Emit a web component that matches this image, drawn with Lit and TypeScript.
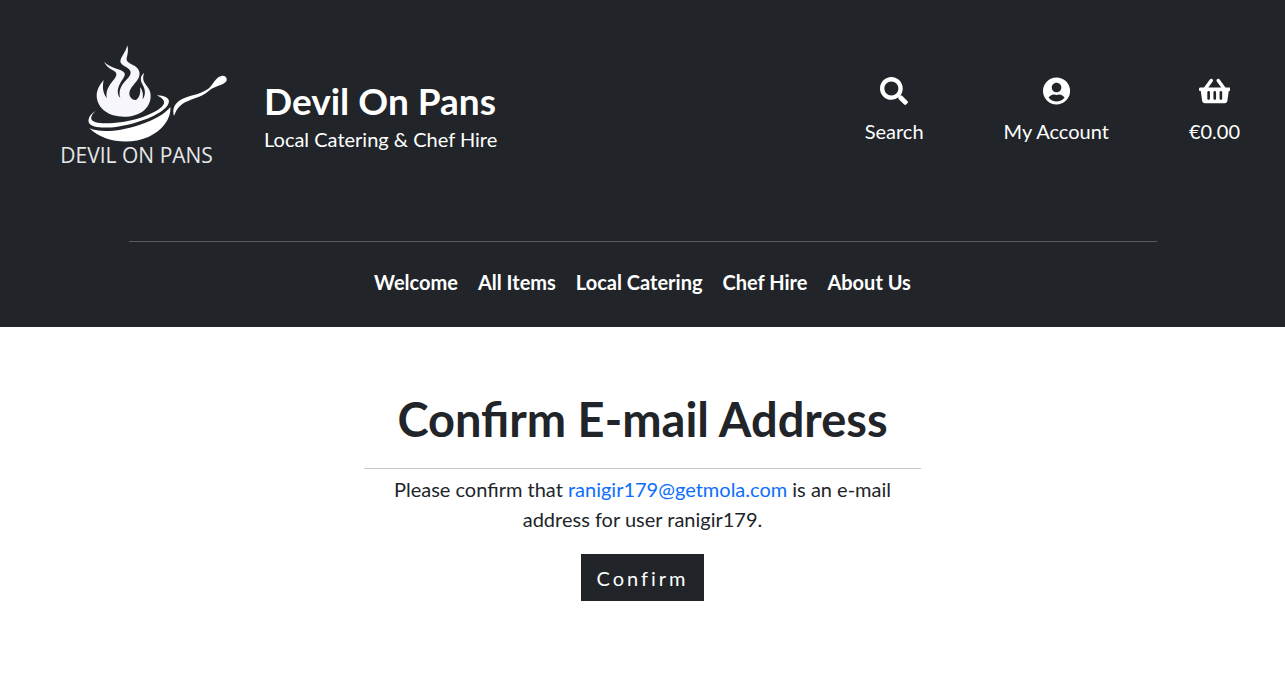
import { LitElement, html, css } from "lit";
import { customElement } from "lit/decorators.js";

@customElement("brand-logo")
class BrandLogo extends LitElement {
  static styles = css`
    :host { display: block; flex: none; }
    svg { display: block; width: 200px; height: 200px; }
    .wordmark { font: 400 63px "Open Sans", sans-serif; fill: #e6e6e8; }
  `;

  render() {
    return html`
      <svg viewBox="0 0 600 600" fill="#fff" role="img" aria-label="Devil On Pans logo">
        <g transform="translate(0 57)">
          <path transform="translate(120 15)" fill="#f8f6fd" d="M112 16 C106 40 92 50 91 65 C95 78 115 80 121 93 C126 108 108 118 97 134 C88 148 87 160 91 174 C80 162 82 145 90 131 C97 118 106 110 104 100 C98 86 60 86 42 65 C52 86 70 88 78 98 C84 110 66 122 58 137 C50 150 48 160 50 174 C40 160 36 145 41 120 C26 138 20 152 20 168 C22 206 56 230 102 230 C148 230 182 206 182 167 C182 142 163 135 160 119 C159 110 160 104 163 98 C150 108 150 120 158 134 C168 152 166 166 158 178 C160 164 158 150 150 142 C153 160 148 174 138 180 C127 181 118 172 118 160 C119 142 138 130 146 113 C153 98 146 84 133 77 C118 69 108 66 110 54 C113 42 116 30 112 16 Z"/>
          <path d="M137 228 C121 236 112 253 117 264 C124 277 158 281 202 275 C263 267 334 239 353 211 C365 192 349 182 320 181 C337 189 346 197 341 208 C330 229 270 254 217 261 C163 269 127 265 124 252 C122 244 129 235 137 228 Z"/>
          <path d="M118 280 C155 295 211 288 270 269 C315 254 348 234 361 216 C364 251 337 287 293 307 C239 330 160 322 118 280 Z"/>
          <path d="M372 243 C366 222 373 207 391 195 C413 181 449 180 475 161 C491 148 496 125 517 122 C530 121 534 135 526 142 C514 153 494 153 476 168 C451 190 418 192 397 207 C382 218 378 229 372 243 Z"/>
          <text class="wordmark" x="31" y="384">DEVIL ON PANS</text>
        </g>
      </svg>
    `;
  }
}

@customElement("site-header")
class SiteHeader extends LitElement {
  static styles = css`
    :host { display: block; background: #212529; color: #fff; padding: 16px 0 30px; }
    a { color: inherit; text-decoration: none; }
    .top { display: flex; align-items: center; justify-content: space-between; padding: 0 45px 0 50px; }
    .brand { display: flex; align-items: center; gap: 14px; }
    .title { margin: 0; font-size: 37px; line-height: 46px; font-weight: 700; }
    .tagline { margin: 0; }
    .tools { display: flex; gap: 80px; padding-bottom: 9px; }
    .tool { display: flex; flex-direction: column; align-items: center; gap: 11px; }
    .icon { display: block; height: 28px; fill: currentColor; }
    .rule { width: 80%; margin: 25px auto; border: 0; border-top: 1px solid #5a5d60; }
    .nav { display: flex; flex-wrap: wrap; justify-content: center; gap: 20px; font-weight: 700; }
  `;

  render() {
    return html`
      <div class="top">
        <div class="brand">
          <a href="#"><brand-logo></brand-logo></a>
          <a href="#">
            <h2 class="title">Devil On Pans</h2>
            <p class="tagline">Local Catering &amp; Chef Hire</p>
          </a>
        </div>
        <div class="tools">
          <a class="tool" href="#">
            <svg class="icon" viewBox="0 0 512 512" aria-hidden="true"><path d="M505 442.7L405.3 343c-4.5-4.500-10.600-7-17-7H372c27.600-35.300 44-79.700 44-128C416 93.100 322.900 0 208 0S0 93.100 0 208s93.100 208 208 208c48.300 0 92.700-16.400 128-44v16.300c0 6.400 2.500 12.500 7 17l99.700 99.700c9.400 9.400 24.600 9.400 33.900 0l28.300-28.300c9.400-9.400 9.400-24.600.1-34zM208 336c-70.700 0-128-57.200-128-128 0-70.700 57.200-128 128-128 70.700 0 128 57.200 128 128 0 70.700-57.200 128-128 128z"/></svg>
            <span>Search</span>
          </a>
          <a class="tool" href="#">
            <svg class="icon" viewBox="0 0 496 512" aria-hidden="true"><path d="M248 8C111 8 0 119 0 256s111 248 248 248 248-111 248-248S385 8 248 8zm0 96c48.600 0 88 39.400 88 88s-39.400 88-88 88-88-39.400-88-88 39.400-88 88-88zm0 344c-58.700 0-111.300-26.600-146.500-68.200 18.800-35.400 55.600-59.800 98.500-59.800 2.400 0 4.800.4 7.100 1.100 13 4.200 26.600 6.900 40.900 6.900 14.300 0 28-2.700 40.900-6.900 2.300-.7 4.700-1.100 7.100-1.100 42.900 0 79.700 24.400 98.500 59.800C359.300 421.400 306.700 448 248 448z"/></svg>
            <span>My Account</span>
          </a>
          <a class="tool" href="#">
            <svg class="icon" viewBox="0 0 576 512" aria-hidden="true"><path d="M576 216v16c0 13.255-10.745 24-24 24h-8l-26.113 182.788C514.509 462.435 494.257 480 470.370 480H105.630c-23.887 0-44.139-17.565-47.518-41.212L32 256h-8c-13.255 0-24-10.745-24-24v-16c0-13.255 10.745-24 24-24h67.341l106.780-146.821c10.395-14.292 30.407-17.453 44.701-7.058 14.293 10.395 17.453 30.408 7.058 44.701L170.477 192h235.046L326.120 82.821c-10.395-14.292-7.234-34.306 7.059-44.701 14.291-10.395 34.306-7.235 44.701 7.058L484.659 192H552c13.255 0 24 10.745 24 24zM312 392V280c0-13.255-10.745-24-24-24s-24 10.745-24 24v112c0 13.255 10.745 24 24 24s24-10.745 24-24zm112 0V280c0-13.255-10.745-24-24-24s-24 10.745-24 24v112c0 13.255 10.745 24 24 24s24-10.745 24-24zm-224 0V280c0-13.255-10.745-24-24-24s-24 10.745-24 24v112c0 13.255 10.745 24 24 24s24-10.745 24-24z"/></svg>
            <span>€0.00</span>
          </a>
        </div>
      </div>
      <hr class="rule" />
      <nav class="nav">
        ${["Welcome", "All Items", "Local Catering", "Chef Hire", "About Us"].map(
          (label) => html`<a href="#">${label}</a>`
        )}
      </nav>
    `;
  }
}

@customElement("app-root")
class AppRoot extends LitElement {
  static styles = css`
    :host { display: block; font-family: Lato, sans-serif; font-size: 20px; line-height: 30px; color: #212529; background: #fff; }
    .main { max-width: 557px; margin: 0 auto; padding: 63px 16px; text-align: center; }
    .heading { margin: 0; font-size: 47px; line-height: 58px; font-weight: 700; }
    .rule { margin: 20px 0 5px; border: 0; border-top: 1px solid #c8c9ca; }
    .text { margin: 0 0 20px; }
    .mail { color: #0d6efd; text-decoration: none; }
    .confirm { font: inherit; letter-spacing: 3px; color: #fff; background: #212529; border: 0; border-radius: 0; padding: 9px 15px 8px; cursor: pointer; }
  `;

  render() {
    return html`
      <site-header></site-header>
      <main class="main">
        <h1 class="heading">Confirm E-mail Address</h1>
        <hr class="rule" />
        <p class="text">
          Please confirm that <a class="mail" href="mailto:ranigir179@getmola.com">ranigir179@getmola.com</a> is an e-mail address for user ranigir179.
        </p>
        <form @submit=${(e: Event) => e.preventDefault()}>
          <button class="confirm" type="submit">Confirm</button>
        </form>
      </main>
    `;
  }
}
